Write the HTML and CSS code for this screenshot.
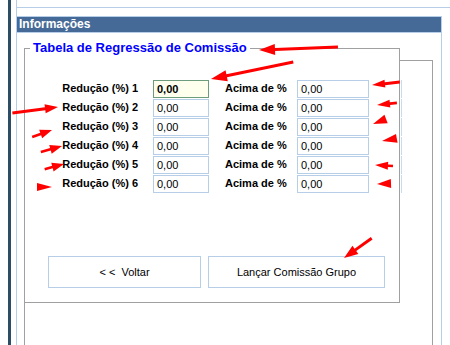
FILE: index.html
```html
<!DOCTYPE html>
<html lang="pt-BR">
<head>
    <meta charset="UTF-8">
    <title>Regressão de Comissão</title>
    <link rel="stylesheet" href="styles.css">
</head>
<body>
    <div class="page">
        <div class="main">
            <div class="topo"></div>

            <div class="painel">
                <div class="painel-titulo">Informações</div>
                <div class="painel-corpo">
                    <div class="moldura">
                        <fieldset class="quadro">
                            <legend>Tabela de Regressão de Comissão</legend>

                            <div class="tabela">
                                <label class="rot">Redução (%) 1</label>
                                <input class="campo ativo" type="text" value="0,00">
                                <label class="rot2">Acima de %</label>
                                <input class="campo largo" type="text" value="0,00">
                                <span class="corte"></span>

                                <label class="rot">Redução (%) 2</label>
                                <input class="campo" type="text" value="0,00">
                                <label class="rot2">Acima de %</label>
                                <input class="campo largo" type="text" value="0,00">
                                <span class="corte"></span>

                                <label class="rot">Redução (%) 3</label>
                                <input class="campo" type="text" value="0,00">
                                <label class="rot2">Acima de %</label>
                                <input class="campo largo" type="text" value="0,00">
                                <span class="corte"></span>

                                <label class="rot">Redução (%) 4</label>
                                <input class="campo" type="text" value="0,00">
                                <label class="rot2">Acima de %</label>
                                <input class="campo largo" type="text" value="0,00">
                                <span class="corte"></span>

                                <label class="rot">Redução (%) 5</label>
                                <input class="campo" type="text" value="0,00">
                                <label class="rot2">Acima de %</label>
                                <input class="campo largo" type="text" value="0,00">
                                <span class="corte"></span>

                                <label class="rot">Redução (%) 6</label>
                                <input class="campo" type="text" value="0,00">
                                <label class="rot2">Acima de %</label>
                                <input class="campo largo" type="text" value="0,00">
                                <span class="corte"></span>
                            </div>

                            <div class="botoes">
                                <button class="btn btn-voltar">&lt; &lt;&nbsp; Voltar</button>
                                <button class="btn btn-lancar">Lançar Comissão Grupo</button>
                            </div>
                        </fieldset>
                    </div>
                </div>
            </div>
        </div>
    </div>

    <!-- marcações em vermelho sobre a tela -->
    <svg class="setas" width="450" height="345" viewBox="0 0 450 345">
        <g fill="#ff0000">
            <path transform="translate(259 50) rotate(-2.2)" d="M0 0 L16 -5.5 L16 -1.5 L79 -1.5 L79 1.5 L16 1.5 L16 5.5 Z"/>
            <path transform="translate(211 79) rotate(-11.7)" d="M0 0 L16 -5.5 L16 -1.5 L84 -1.5 L84 1.5 L16 1.5 L16 5.5 Z"/>

            <path transform="translate(58 107) rotate(172.6)" d="M0 0 L13 -4.5 L13 -1.5 L46 -1.5 L46 1.5 L13 1.5 L13 4.5 Z"/>
            <path transform="translate(52 130) rotate(160.7)" d="M0 0 L12 -4.5 L12 -1.3 L21 -1.3 L21 1.3 L12 1.3 L12 4.5 Z"/>
            <path transform="translate(62 146) rotate(164)" d="M0 0 L12 -4.5 L12 -1.3 L22 -1.3 L22 1.3 L12 1.3 L12 4.5 Z"/>
            <path transform="translate(64 164) rotate(165)" d="M0 0 L12 -4.5 L12 -1.3 L20 -1.3 L20 1.3 L12 1.3 L12 4.5 Z"/>
            <path transform="translate(52 187) rotate(180)" d="M0 0 L15 -4 L15 4 Z"/>

            <path transform="translate(372 85) rotate(-6)" d="M0 0 L13 -4 L13 -1.5 L28 -1.5 L28 1.5 L13 1.5 L13 4 Z"/>
            <path transform="translate(377 105) rotate(-6)" d="M0 0 L13 -4 L13 -1.3 L20 -1.3 L20 1.3 L13 1.3 L13 4 Z"/>
            <path transform="translate(373 124) rotate(-21)" d="M0 0 L14 -4.5 L14 4.5 Z"/>
            <path transform="translate(382 141) rotate(-10)" d="M0 0 L15 -4.5 L15 4.5 Z"/>
            <path transform="translate(375 165) rotate(3)" d="M0 0 L13 -4 L13 -1.3 L18 -1.3 L18 1.3 L13 1.3 L13 4 Z"/>
            <path transform="translate(377 184) rotate(-2)" d="M0 0 L14 -4.5 L14 4.5 Z"/>

            <path transform="translate(344 258) rotate(-35.5)" d="M0 0 L14 -5 L14 -1.5 L34 -1.5 L34 1.5 L14 1.5 L14 5 Z"/>
        </g>
    </svg>
</body>
</html>
```

FILE: styles.css
```css
html, body {
    margin: 0;
    padding: 0;
    background: #fff;
    overflow: hidden;
}

body {
    font-family: 'Liberation Sans', Arial, sans-serif;
    color: #000;
    padding-left: 8px;
}

.page {
    border-left: 3px solid #2b4e64;
    padding-left: 5px;
    height: 345px;
}

.main {
    border-left: 1px solid #b7cee8;
    height: 100%;
}

.topo {
    height: 7px;
    border-bottom: 1px solid #b7cee8;
    margin-bottom: 8px;
}

.painel {
    width: 424px;
    border-top: 1px solid #b7cee8;
    border-right: 1px solid #b7cee8;
    height: 330px;
}

.painel-titulo {
    background-color: #466a97;
    color: #fff;
    font-size: 12px;
    font-weight: bold;
    height: 15px;
    line-height: 15px;
    padding-left: 2px;
    border-bottom: 1px solid #b7cee8;
}

.painel-corpo {
    padding: 27px 8px 0 7px;
}

.moldura {
    border: 1px solid #a0a0a0;
    border-bottom: none;
    height: 300px;
}

.quadro {
    box-sizing: border-box;
    width: 376px;
    min-width: 0;
    margin: -21px 0 0 -1px;
    padding: 24px 0 14px 0;
    border: 1px solid #a0a0a0;
    background: #fff;
}

.quadro legend {
    color: #0000ff;
    font-size: 13px;
    font-weight: bold;
    line-height: 16px;
    padding: 0 3px;
    margin-left: 5px;
}

.tabela {
    display: grid;
    grid-template-columns: 93px 56px 88px 72px 33px;
    grid-auto-rows: 18px;
    row-gap: 1px;
    align-items: center;
    margin-left: 35px;
}

.rot, .rot2 {
    font-size: 11px;
    font-weight: bold;
    line-height: 13px;
    margin-top: -2px;
}

.rot {
    text-align: right;
    padding-right: 15px;
}

.rot2 {
    padding-left: 16px;
}

.campo {
    box-sizing: border-box;
    width: 56px;
    height: 18px;
    margin: 0;
    padding: 0 0 0 3px;
    border: 1px solid #b7cee8;
    background: #fff;
    font-family: 'Liberation Sans', Arial, sans-serif;
    font-size: 11px;
    color: #000;
    outline: none;
}

.campo.largo {
    width: 72px;
}

.campo.ativo {
    border-color: #6c9c7c;
    background: #ffffee;
    font-weight: bold;
}

.corte {
    box-sizing: border-box;
    height: 18px;
    border-right: 1px solid #c9dbee;
}

.botoes {
    display: flex;
    gap: 7px;
    margin: 63px 0 0 23px;
}

.btn {
    box-sizing: border-box;
    height: 32px;
    border: 1px solid #b7cee8;
    background: #fff;
    font-family: 'Liberation Sans', Arial, sans-serif;
    font-size: 11px;
    color: #000;
    padding: 0;
}

.btn-voltar {
    width: 153px;
}

.btn-lancar {
    width: 177px;
}

.setas {
    position: absolute;
    top: 0;
    left: 0;
    pointer-events: none;
}
```
